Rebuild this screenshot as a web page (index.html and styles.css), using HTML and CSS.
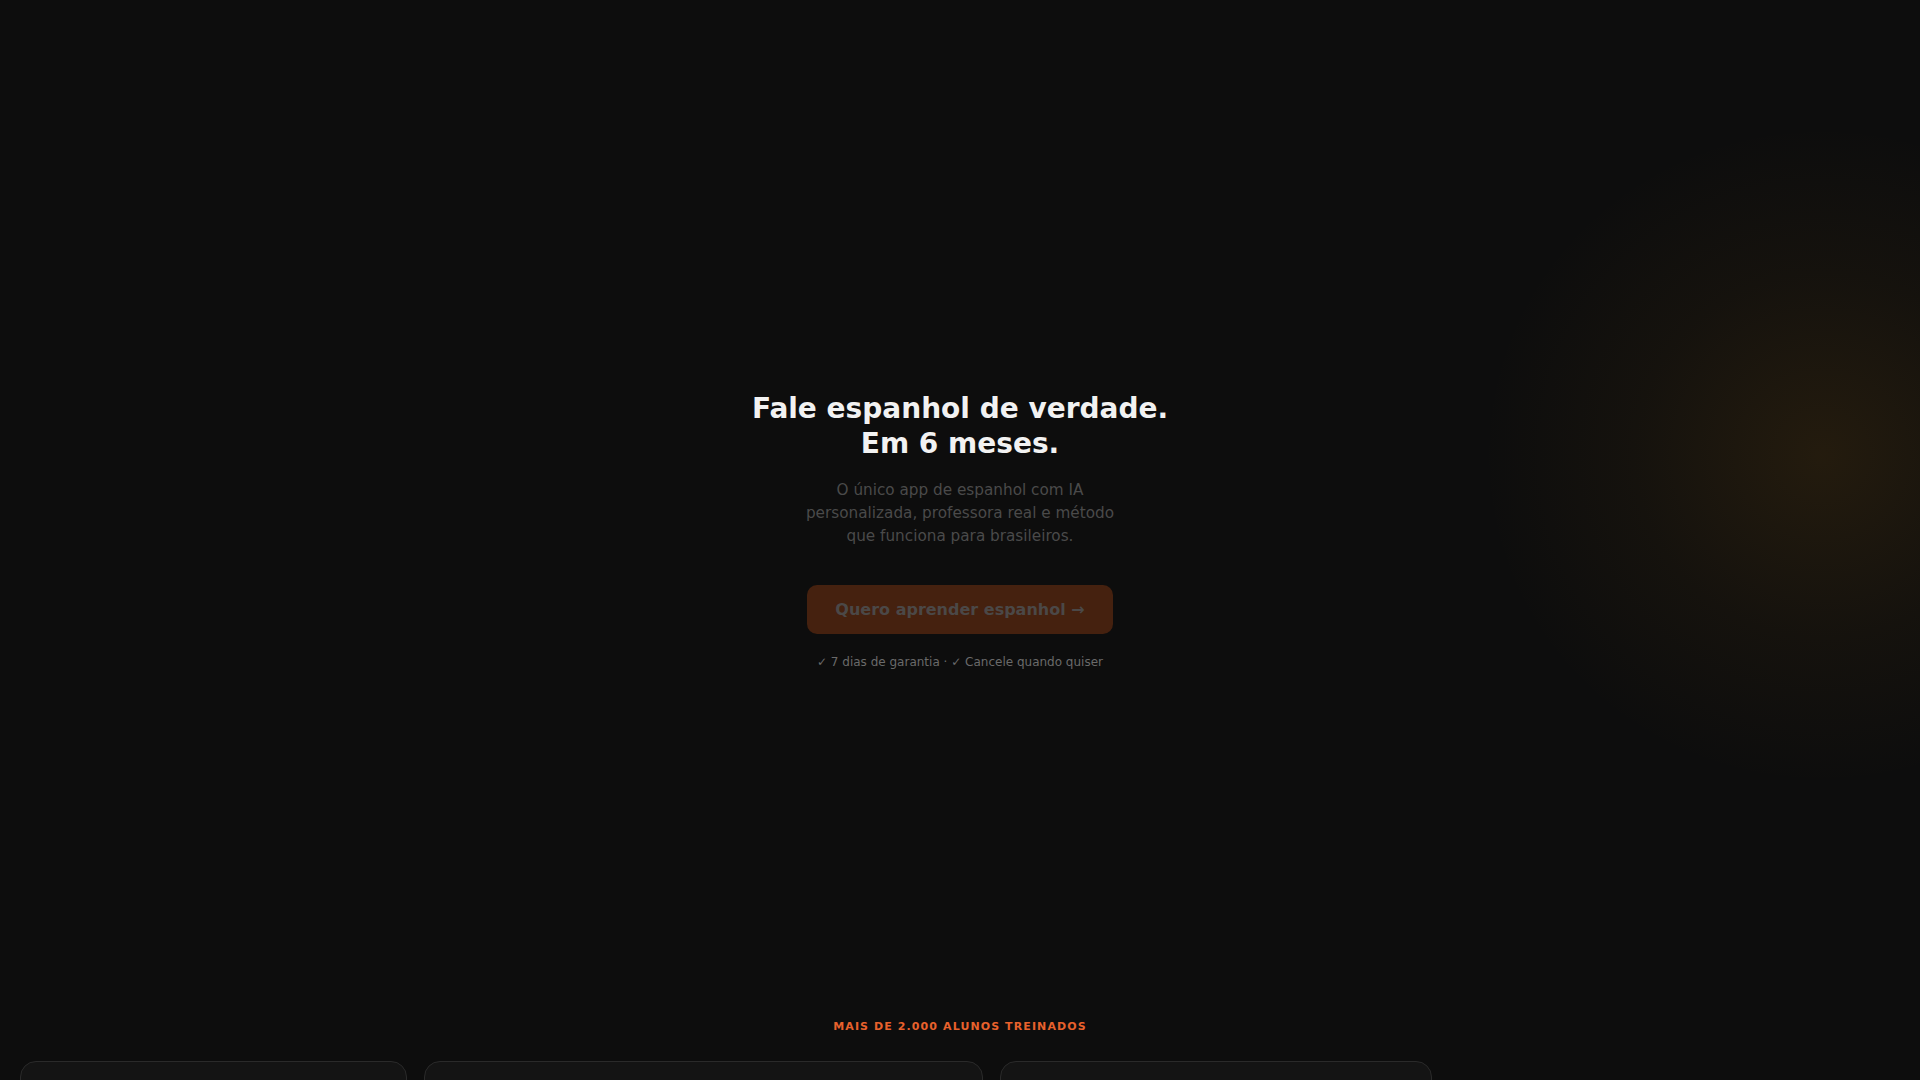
FILE: index.html
```html
<!DOCTYPE html>
<html lang="pt-BR">
<head>
<meta charset="utf-8">
<title>Fale espanhol de verdade</title>
<link rel="stylesheet" href="styles.css">
</head>
<body>
<main class="page">
  <section class="hero">
    <div class="hero-inner">
      <h1 class="hero-title">Fale espanhol de verdade.<br>Em 6 meses.</h1>
      <p class="hero-sub">O único app de espanhol com IA personalizada, professora real e método que funciona para brasileiros.</p>
      <a class="cta" href="#">Quero aprender espanhol →</a>
      <p class="guarantee">✓ 7 dias de garantia · ✓ Cancele quando quiser</p>
    </div>
  </section>
  <section class="proof">
    <p class="proof-label">MAIS DE 2.000 ALUNOS TREINADOS</p>
    <div class="cards">
      <div class="card card-a"></div>
      <div class="card card-b"></div>
      <div class="card card-c"></div>
    </div>
  </section>
</main>
</body>
</html>
```

FILE: styles.css
```css
* { box-sizing: border-box; }
html, body { margin: 0; padding: 0; }
body {
  background: radial-gradient(ellipse 340px 330px at 1822px 455px, rgba(200,130,20,0.12), rgba(200,130,20,0.045) 55%, rgba(200,130,20,0) 100%), #0d0d0d;
  background-repeat: no-repeat;
  background-color: #0d0d0d;
  font-family: "DejaVu Sans", sans-serif;
  color: #f0f0f0;
  overflow: hidden;
  height: 1080px;
}
.page { display: flex; flex-direction: column; }
.hero {
  height: 1000px;
  display: flex;
  align-items: center;
  justify-content: center;
  padding-top: 60px;
}
.hero-inner {
  display: flex;
  flex-direction: column;
  align-items: center;
  text-align: center;
}
.hero-title {
  margin: 0;
  font-size: 28px;
  font-weight: 700;
  line-height: 35px;
  color: #f2f2f2;
}
.hero-sub {
  margin: 18px 0 0;
  width: 330px;
  font-size: 15.25px;
  line-height: 23px;
  color: #4a4a4a;
}
.cta {
  margin-top: 37px;
  width: 306px;
  height: 49px;
  display: flex;
  align-items: center;
  justify-content: center;
  background: #45210f;
  border-radius: 10px;
  color: #4b4847;
  font-size: 16px;
  font-weight: 700;
  text-decoration: none;
}
.guarantee {
  margin: 20px 0 0;
  font-size: 12px;
  line-height: 16px;
  color: #6a6a6a;
}
.proof {
  display: flex;
  flex-direction: column;
  align-items: center;
}
.proof-label {
  margin: 20px 0 0;
  font-size: 11px;
  font-weight: 700;
  letter-spacing: 1.1px;
  line-height: 14px;
  color: #e8612c;
}
.cards {
  align-self: stretch;
  display: flex;
  gap: 17px;
  padding-left: 20px;
  margin-top: 27px;
}
.card {
  flex: none;
  height: 220px;
  background: #141414;
  border: 1px solid #2a2a2a;
  border-radius: 16px;
}
.card-a { width: 387px; }
.card-b { width: 559px; }
.card-c { width: 432px; }
```
